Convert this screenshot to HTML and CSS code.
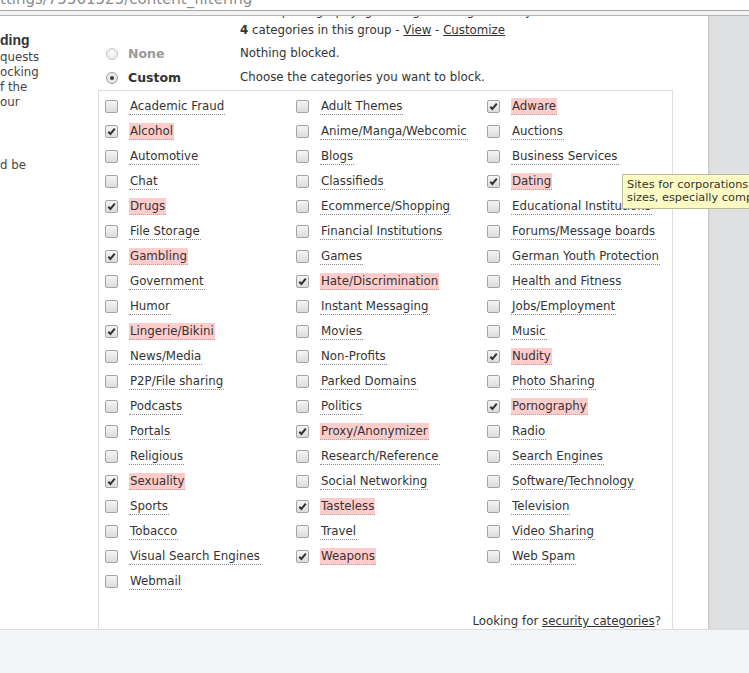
FILE: index.html
```html
<!DOCTYPE html>
<html lang="en">
<head>
    <meta charset="UTF-8">
    <title>Content Filtering</title>
    <link rel="stylesheet" href="styles.css">
</head>
<body>
    <div class="chrome">
        <div class="address-line">
            <div class="address">ttings/75561525/content_filtering</div>
        </div>
        <div class="chrome-band"></div>
    </div>

    <div class="viewport">
        <div class="page">
            <div class="sidebar">
                <h2>ding</h2>
                <p>quests<br>ocking<br>f the<br>our</p>
                <p class="tail">d be</p>
            </div>

            <div class="main">
                <div class="option first">
                    <span class="radio"></span>
                    <span class="opt-name">Moderate</span>
                    <div class="opt-desc">
                        <div class="lead">Blocks pornography, gambling and illegal activity.</div>
                        <div><b>4</b> categories in this group - <a href="#">View</a> - <a href="#">Customize</a></div>
                    </div>
                </div>
                <div class="option none">
                    <span class="radio off"></span>
                    <span class="opt-name muted">None</span>
                    <div class="opt-desc">Nothing blocked.</div>
                </div>
                <div class="option custom">
                    <span class="radio on"></span>
                    <span class="opt-name">Custom</span>
                    <div class="opt-desc">Choose the categories you want to block.</div>
                </div>

                <div class="categories">
                    <div class="cat-columns">
                        <ul class="cat-list">
                            <li><span class="check"></span><span class="cat-label">Academic Fraud</span></li>
                            <li class="blocked"><span class="check"><svg viewBox="0 0 12 12"><path d="M2.5 6.2 L4.8 8.6 L9.6 2.8"/></svg></span><span class="cat-label">Alcohol</span></li>
                            <li><span class="check"></span><span class="cat-label">Automotive</span></li>
                            <li><span class="check"></span><span class="cat-label">Chat</span></li>
                            <li class="blocked"><span class="check"><svg viewBox="0 0 12 12"><path d="M2.5 6.2 L4.8 8.6 L9.6 2.8"/></svg></span><span class="cat-label">Drugs</span></li>
                            <li><span class="check"></span><span class="cat-label">File Storage</span></li>
                            <li class="blocked"><span class="check"><svg viewBox="0 0 12 12"><path d="M2.5 6.2 L4.8 8.6 L9.6 2.8"/></svg></span><span class="cat-label">Gambling</span></li>
                            <li><span class="check"></span><span class="cat-label">Government</span></li>
                            <li><span class="check"></span><span class="cat-label">Humor</span></li>
                            <li class="blocked"><span class="check"><svg viewBox="0 0 12 12"><path d="M2.5 6.2 L4.8 8.6 L9.6 2.8"/></svg></span><span class="cat-label">Lingerie/Bikini</span></li>
                            <li><span class="check"></span><span class="cat-label">News/Media</span></li>
                            <li><span class="check"></span><span class="cat-label">P2P/File sharing</span></li>
                            <li><span class="check"></span><span class="cat-label">Podcasts</span></li>
                            <li><span class="check"></span><span class="cat-label">Portals</span></li>
                            <li><span class="check"></span><span class="cat-label">Religious</span></li>
                            <li class="blocked"><span class="check"><svg viewBox="0 0 12 12"><path d="M2.5 6.2 L4.8 8.6 L9.6 2.8"/></svg></span><span class="cat-label">Sexuality</span></li>
                            <li><span class="check"></span><span class="cat-label">Sports</span></li>
                            <li><span class="check"></span><span class="cat-label">Tobacco</span></li>
                            <li><span class="check"></span><span class="cat-label">Visual Search Engines</span></li>
                            <li><span class="check"></span><span class="cat-label">Webmail</span></li>
                        </ul>
                        <ul class="cat-list">
                            <li><span class="check"></span><span class="cat-label">Adult Themes</span></li>
                            <li><span class="check"></span><span class="cat-label">Anime/Manga/Webcomic</span></li>
                            <li><span class="check"></span><span class="cat-label">Blogs</span></li>
                            <li><span class="check"></span><span class="cat-label">Classifieds</span></li>
                            <li><span class="check"></span><span class="cat-label">Ecommerce/Shopping</span></li>
                            <li><span class="check"></span><span class="cat-label">Financial Institutions</span></li>
                            <li><span class="check"></span><span class="cat-label">Games</span></li>
                            <li class="blocked"><span class="check"><svg viewBox="0 0 12 12"><path d="M2.5 6.2 L4.8 8.6 L9.6 2.8"/></svg></span><span class="cat-label">Hate/Discrimination</span></li>
                            <li><span class="check"></span><span class="cat-label">Instant Messaging</span></li>
                            <li><span class="check"></span><span class="cat-label">Movies</span></li>
                            <li><span class="check"></span><span class="cat-label">Non-Profits</span></li>
                            <li><span class="check"></span><span class="cat-label">Parked Domains</span></li>
                            <li><span class="check"></span><span class="cat-label">Politics</span></li>
                            <li class="blocked"><span class="check"><svg viewBox="0 0 12 12"><path d="M2.5 6.2 L4.8 8.6 L9.6 2.8"/></svg></span><span class="cat-label">Proxy/Anonymizer</span></li>
                            <li><span class="check"></span><span class="cat-label">Research/Reference</span></li>
                            <li><span class="check"></span><span class="cat-label">Social Networking</span></li>
                            <li class="blocked"><span class="check"><svg viewBox="0 0 12 12"><path d="M2.5 6.2 L4.8 8.6 L9.6 2.8"/></svg></span><span class="cat-label">Tasteless</span></li>
                            <li><span class="check"></span><span class="cat-label">Travel</span></li>
                            <li class="blocked"><span class="check"><svg viewBox="0 0 12 12"><path d="M2.5 6.2 L4.8 8.6 L9.6 2.8"/></svg></span><span class="cat-label">Weapons</span></li>
                        </ul>
                        <ul class="cat-list">
                            <li class="blocked"><span class="check"><svg viewBox="0 0 12 12"><path d="M2.5 6.2 L4.8 8.6 L9.6 2.8"/></svg></span><span class="cat-label">Adware</span></li>
                            <li><span class="check"></span><span class="cat-label">Auctions</span></li>
                            <li><span class="check"></span><span class="cat-label">Business Services</span></li>
                            <li class="blocked"><span class="check"><svg viewBox="0 0 12 12"><path d="M2.5 6.2 L4.8 8.6 L9.6 2.8"/></svg></span><span class="cat-label">Dating</span></li>
                            <li><span class="check"></span><span class="cat-label">Educational Institutions</span></li>
                            <li><span class="check"></span><span class="cat-label">Forums/Message boards</span></li>
                            <li><span class="check"></span><span class="cat-label">German Youth Protection</span></li>
                            <li><span class="check"></span><span class="cat-label">Health and Fitness</span></li>
                            <li><span class="check"></span><span class="cat-label">Jobs/Employment</span></li>
                            <li><span class="check"></span><span class="cat-label">Music</span></li>
                            <li class="blocked"><span class="check"><svg viewBox="0 0 12 12"><path d="M2.5 6.2 L4.8 8.6 L9.6 2.8"/></svg></span><span class="cat-label">Nudity</span></li>
                            <li><span class="check"></span><span class="cat-label">Photo Sharing</span></li>
                            <li class="blocked"><span class="check"><svg viewBox="0 0 12 12"><path d="M2.5 6.2 L4.8 8.6 L9.6 2.8"/></svg></span><span class="cat-label">Pornography</span></li>
                            <li><span class="check"></span><span class="cat-label">Radio</span></li>
                            <li><span class="check"></span><span class="cat-label">Search Engines</span></li>
                            <li><span class="check"></span><span class="cat-label">Software/Technology</span></li>
                            <li><span class="check"></span><span class="cat-label">Television</span></li>
                            <li><span class="check"></span><span class="cat-label">Video Sharing</span></li>
                            <li><span class="check"></span><span class="cat-label">Web Spam</span></li>
                        </ul>
                    </div>
                    <div class="security-note">Looking for <a href="#">security categories</a>?</div>
                </div>
            </div>
        </div>
        <div class="gutter"></div>
    </div>

    <div class="statusbar"></div>

    <div class="tooltip">Sites for corporations of all<br>sizes, especially companies</div>
</body>
</html>
```

FILE: styles.css
```css
body {
    margin: 0;
    width: 749px;
    height: 673px;
    overflow: hidden;
    position: relative;
    background: #fff;
    font-family: "DejaVu Sans", Verdana, sans-serif;
    font-size: 11.8px;
    color: #333;
}

a {
    color: #333;
    text-decoration: underline;
}

/* browser chrome */
.address-line {
    height: 10px;
    overflow: hidden;
    border-bottom: 1px solid #a9a9a9;
}

.address {
    margin-top: -10px;
    font-size: 15px;
    line-height: 18px;
    color: #8c8c8c;
}

.chrome-band {
    height: 4px;
    background: #f4f4f4;
    border-bottom: 1px solid #b4b4b4;
}

.viewport {
    display: flex;
    height: 613px;
}

.page {
    flex: 1;
    display: flex;
    overflow: hidden;
}

.gutter {
    width: 41px;
    background: #dfe0e2;
    box-shadow: inset 2px 0 2px -1px #c2c2c2;
}

.statusbar {
    height: 43px;
    border-top: 1px solid #dcdcdc;
    background: #f4f5f7;
}

/* left column */
.sidebar {
    width: 98px;
    flex: none;
    padding-top: 16px;
}

.sidebar h2 {
    margin: 0;
    font-family: "Liberation Sans", Arial, sans-serif;
    font-size: 14px;
    line-height: 17px;
    font-weight: bold;
    color: #333;
}

.sidebar p {
    margin: 1px 0 0;
    line-height: 15px;
    color: #444;
}

.sidebar .tail {
    margin-top: 48px;
}

/* options */
.main {
    width: 610px;
    flex: none;
    margin-top: -16px;
}

.option {
    display: flex;
    align-items: flex-start;
    padding-left: 8px;
    line-height: 17px;
}

.option.first {
    margin-bottom: 6px;
    line-height: 22px;
}

.option.first .opt-desc div + div {
    line-height: 17px;
}

.option.none {
    margin-bottom: 7px;
}

.option.custom {
    margin-bottom: 4px;
}

.radio {
    width: 12px;
    height: 12px;
    box-sizing: border-box;
    margin: 3px 10px 0 0;
    flex: none;
    border: 1px solid #a2a2a2;
    border-radius: 50%;
    background: radial-gradient(circle at 50% 40%, #f7f7f7, #d9d9d9);
    position: relative;
}

.radio.off {
    border-color: #c4c4c4;
    background: radial-gradient(circle at 50% 40%, #fbfbfb, #e6e6e6);
}

.radio.on::after {
    content: "";
    position: absolute;
    left: 3px;
    top: 3px;
    width: 4px;
    height: 4px;
    border-radius: 50%;
    background: #3a3a3a;
}

.opt-name {
    width: 112px;
    flex: none;
    font-weight: bold;
    font-size: 12.5px;
}

.opt-name.muted {
    color: #9a9a9a;
}

/* category box */
.categories {
    width: 575px;
    box-sizing: border-box;
    border: 1px solid #dedede;
    padding: 3px 11px 20px 6px;
}

.cat-columns {
    display: flex;
}

.cat-list {
    list-style: none;
    margin: 0;
    padding: 0;
    width: 191px;
    flex: none;
}

.cat-list li {
    display: flex;
    align-items: center;
    height: 25px;
    white-space: nowrap;
}

.check {
    width: 13px;
    height: 13px;
    box-sizing: border-box;
    margin-right: 11px;
    flex: none;
    border: 1px solid #a3a3a3;
    border-radius: 2px;
    background: linear-gradient(#f5f5f5, #dcdcdc);
    position: relative;
}

.check svg {
    position: absolute;
    left: 0;
    top: 0;
    width: 11px;
    height: 11px;
    fill: none;
    stroke: #333;
    stroke-width: 2.2;
}

.cat-label {
    display: inline-block;
    line-height: 16px;
    padding: 0 1px;
    border-bottom: 1px dotted #8a8a8a;
}

.blocked .cat-label {
    background: #ffcccc;
    border-bottom-color: #c49a9a;
}

.security-note {
    margin-top: 17px;
    line-height: 20px;
    text-align: right;
}

/* native tooltip */
.tooltip {
    position: absolute;
    left: 622px;
    top: 174px;
    padding: 3px 4px 4px;
    font-size: 11.3px;
    line-height: 13px;
    white-space: nowrap;
    background: #fdfbc4;
    border: 1px solid #bdbb9a;
    color: #333;
}
```
